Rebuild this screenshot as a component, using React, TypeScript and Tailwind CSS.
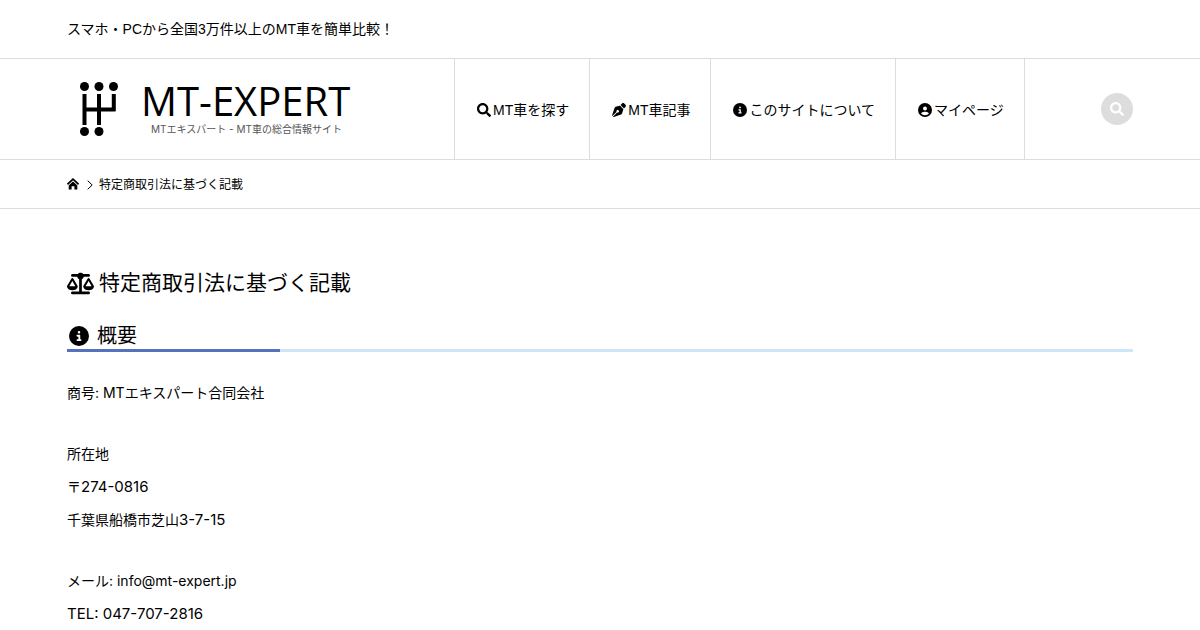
import { FaSearch } from "react-icons/fa";
import { FaCircleInfo, FaCircleUser, FaPenNib, FaScaleBalanced } from "react-icons/fa6";

const navItems = [
  { label: "MT車を探す", href: "#search", icon: FaSearch },
  { label: "MT車記事", href: "#articles", icon: FaPenNib },
  { label: "このサイトについて", href: "#about", icon: FaCircleInfo },
  { label: "マイページ", href: "#mypage", icon: FaCircleUser },
];

function ShiftGateMark() {
  return (
    <svg width="40" height="56" viewBox="0 0 40 56" aria-hidden="true">
      <g fill="#000">
        <circle cx="5.5" cy="5.5" r="4.5" />
        <circle cx="20" cy="5.5" r="4.5" />
        <circle cx="34.5" cy="5.5" r="4.5" />
        <circle cx="5.5" cy="50.5" r="4.5" />
        <circle cx="20" cy="50.5" r="4.5" />
      </g>
      <path d="M5.5 13v31M20 13v31M5.5 28.5h31M34.8 13v17" fill="none" stroke="#000" strokeWidth="4" />
    </svg>
  );
}

function HomeIcon() {
  return (
    <svg width="12" height="12" viewBox="0 0 12 12" aria-hidden="true">
      <path d="M.4 6.3 6 1.2l5.6 5.1" fill="none" stroke="#000" strokeWidth="1.8" />
      <path d="M6 3.6 10.3 7.4V11.5H7.4V8.2H4.6v3.3H1.7V7.4z" fill="#000" />
    </svg>
  );
}

function Header() {
  return (
    <header className="font-['Liberation_Sans','Noto_Sans_CJK_JP',sans-serif] text-sm">
      <div className="border-b border-[#ddd] px-[67px]">
        <p className="py-[19px] leading-5">スマホ・PCから全国3万件以上のMT車を簡単比較！</p>
      </div>
      <div className="flex items-center border-b border-[#ddd] px-[67px]">
        <a href="#top" className="flex w-[387px] shrink-0 items-center gap-[22px] pl-3">
          <ShiftGateMark />
          <span className="flex flex-col">
            <span className="font-['Open_Sans',sans-serif] text-[40px] leading-10 whitespace-nowrap">
              MT-EXPERT
            </span>
            <span className="pl-2.5 font-['Inter','Noto_Sans_CJK_JP',sans-serif] text-[10px] leading-4 whitespace-nowrap text-[#555]">
              MTエキスパート - MT車の総合情報サイト
            </span>
          </span>
        </a>
        <nav className="flex border-l border-[#ddd]">
          {navItems.map(({ label, href, icon: Icon }) => (
            <a
              key={href}
              href={href}
              className="flex h-[100px] items-center gap-0.5 border-r border-[#ddd] pt-0.5 pr-5 pl-[22px] whitespace-nowrap"
            >
              <Icon size={14} />
              {label}
            </a>
          ))}
        </nav>
        <button
          type="button"
          aria-label="検索"
          className="ml-auto flex size-8 items-center justify-center rounded-full bg-[#ddd] text-white"
        >
          <FaSearch size={14} />
        </button>
      </div>
    </header>
  );
}

function Breadcrumb() {
  return (
    <nav aria-label="パンくず" className="border-b border-[#ddd] px-[67px]">
      <ol className="flex h-12 items-center pt-0.5 text-xs">
        <li className="pb-0.5">
          <a href="#top" aria-label="ホーム">
            <HomeIcon />
          </a>
        </li>
        <li className="flex items-center gap-1.5 pl-2">
          <svg width="6" height="10" viewBox="0 0 6 10" aria-hidden="true">
            <path d="M.7.7 5.2 5 .7 9.3" fill="none" stroke="#000" />
          </svg>
          特定商取引法に基づく記載
        </li>
      </ol>
    </nav>
  );
}

export default function App() {
  return (
    <div className="min-h-screen bg-white font-['Inter','Noto_Sans_CJK_JP',sans-serif] text-black">
      <Header />
      <Breadcrumb />
      <main className="px-[67px] pt-[58px]">
        <h1 className="flex items-center gap-[5px] text-[21px] leading-8">
          <FaScaleBalanced size={27} />
          特定商取引法に基づく記載
        </h1>
        <h2 className="mt-6 flex items-center gap-2 pl-0.5 text-xl leading-[26px]">
          <FaCircleInfo size={20} />
          概要
        </h2>
        <div className="h-[3px] bg-[#cfe5f8]">
          <div className="h-full w-1/5 bg-[#5472bd]" />
        </div>
        <div className="mt-6 space-y-7 text-sm leading-[33px]">
          <p>商号: MTエキスパート合同会社</p>
          <p>
            所在地
            <br />
            〒<span className="text-[15px]">274-0816</span>
            <br />
            千葉県船橋市芝山<span className="text-[15px]">3-7-15</span>
          </p>
          <p>
            メール: info@mt-expert.jp
            <br />
            <span className="text-[15px]">TEL: 047-707-2816</span>
          </p>
        </div>
      </main>
    </div>
  );
}
